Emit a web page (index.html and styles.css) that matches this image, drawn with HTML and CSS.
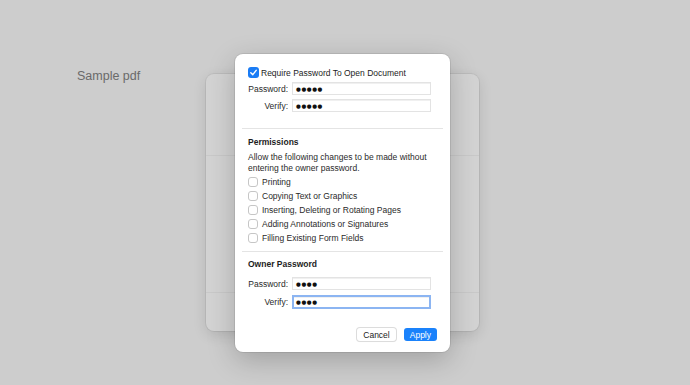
FILE: index.html
```html
<!DOCTYPE html>
<html lang="en">
<head>
    <meta charset="UTF-8">
    <meta name="viewport" content="width=device-width, initial-scale=1.0">
    <title>Sample pdf - Encryption</title>
    <link rel="stylesheet" href="styles.css">
</head>
<body>

    <div class="page">
        <div class="doc-title">Sample pdf</div>
        <div class="sheet">
            <div class="sheet-top"></div>
            <div class="sheet-middle"></div>
            <div class="sheet-bottom"></div>
        </div>
    </div>

    <div class="dialog">
        <label class="check-row">
            <span class="box checked">
                <svg viewBox="0 0 10 10" width="9" height="9"><path d="M2 5.2 L4.2 7.4 L8 2.6" fill="none" stroke="#fff" stroke-width="1.6" stroke-linecap="round" stroke-linejoin="round"/></svg>
            </span>
            Require Password To Open Document
        </label>
        <div class="field-row">
            <span class="field-label">Password:</span>
            <span class="field"><span class="dots">●●●●●</span></span>
        </div>
        <div class="field-row">
            <span class="field-label">Verify:</span>
            <span class="field"><span class="dots">●●●●●</span></span>
        </div>

        <hr class="divider">

        <div class="section-title">Permissions</div>
        <p class="note">Allow the following changes to be made without entering the owner password.</p>
        <label class="perm-row"><span class="box"></span>Printing</label>
        <label class="perm-row"><span class="box"></span>Copying Text or Graphics</label>
        <label class="perm-row"><span class="box"></span>Inserting, Deleting or Rotating Pages</label>
        <label class="perm-row"><span class="box"></span>Adding Annotations or Signatures</label>
        <label class="perm-row"><span class="box"></span>Filling Existing Form Fields</label>

        <hr class="divider lower">

        <div class="section-title">Owner Password</div>
        <div class="field-row owner">
            <span class="field-label">Password:</span>
            <span class="field"><span class="dots">●●●●</span></span>
        </div>
        <div class="field-row owner">
            <span class="field-label">Verify:</span>
            <span class="field focused"><span class="dots">●●●●</span></span>
        </div>

        <div class="buttons">
            <button class="btn">Cancel</button>
            <button class="btn primary">Apply</button>
        </div>
    </div>

</body>
</html>
```

FILE: styles.css
```css
body {
    margin: 0;
    height: 385px;
    overflow: hidden;
    background-color: #cdcdcd;
    font-family: "Liberation Sans", Arial, sans-serif;
    color: #1d1d1d;
}
.page {
    display: flex;
    padding: 69px 0 0 77px;
}
.doc-title {
    width: 129px;
    font-size: 12.5px;
    color: #6a6a6a;
}
.sheet {
    margin-top: 5px;
    width: 273px;
    height: 257px;
    background: #d3d3d3;
    border-radius: 8px;
    box-shadow: 0 0 0 1px rgba(0, 0, 0, 0.06), 0 4px 14px rgba(0, 0, 0, 0.12);
    display: flex;
    flex-direction: column;
}
.sheet-top {
    height: 81px;
    border-bottom: 1px solid #c9c9c9;
}
.sheet-middle {
    flex: 1;
    border-bottom: 1px solid #c9c9c9;
}
.sheet-bottom {
    height: 38px;
}

/* dialog over the document */
.dialog {
    position: absolute;
    left: 235px;
    top: 54px;
    width: 215px;
    height: 298px;
    box-sizing: border-box;
    padding: 13px 13px 0 13px;
    background: #ffffff;
    border-radius: 8px;
    box-shadow: 0 0 0 1px rgba(0, 0, 0, 0.08), 0 8px 28px rgba(0, 0, 0, 0.22);
    font-size: 8.5px;
}
.box {
    display: inline-flex;
    align-items: center;
    justify-content: center;
    box-sizing: border-box;
    width: 10px;
    height: 10px;
    border: 1px solid #c6c6c6;
    border-radius: 3px;
    background: #fff;
    margin-right: 4px;
    flex-shrink: 0;
}
.box.checked {
    width: 11px;
    height: 11px;
    border: none;
    background: #1a7cf5;
}
.check-row {
    display: flex;
    align-items: center;
    height: 11px;
    margin-bottom: 4px;
}
.check-row .box {
    margin-right: 2px;
}
.field-row {
    display: flex;
    align-items: center;
    margin-bottom: 4px;
}
.field-label {
    width: 40px;
    text-align: right;
    margin-right: 4px;
    color: #2a2a2a;
}
.field {
    display: flex;
    align-items: center;
    box-sizing: border-box;
    width: 139px;
    height: 13px;
    padding-left: 3px;
    border: 1px solid #e3e3e3;
    box-shadow: inset 0 1px 0 #f0f0f0;
}
.field.focused {
    border: 2px solid #8cb5f2;
    padding-left: 2px;
    height: 14px;
}
.dots {
    font-family: "DejaVu Sans", sans-serif;
    font-size: 5.5px;
    letter-spacing: 0.6px;
    color: #111;
}
.divider {
    border: none;
    border-top: 1px solid #e4e4e4;
    margin: 16px -6px 7px -6px;
}
.divider.lower {
    margin-top: 6px;
    margin-bottom: 6px;
}
.section-title {
    font-weight: bold;
    height: 12px;
    line-height: 12px;
}
.note {
    margin: 4px 0 1px 0;
    line-height: 11px;
    color: #2a2a2a;
}
.perm-row {
    display: flex;
    align-items: center;
    height: 14px;
    color: #2a2a2a;
}
.owner {
    margin-top: 7px;
}
.owner + .owner {
    margin-top: 5px;
}
.buttons {
    display: flex;
    justify-content: flex-end;
    gap: 8px;
    margin-top: 19px;
}
.btn {
    font-family: inherit;
    font-size: 8.5px;
    height: 13px;
    padding: 0 6px;
    border: none;
    border-radius: 3px;
    background: #fff;
    color: #222;
    box-shadow: 0 0 0 1px #dcdcdc, 0 1px 1px rgba(0, 0, 0, 0.06);
}
.btn.primary {
    background: #1a82fb;
    color: #fff;
    box-shadow: none;
}
```
